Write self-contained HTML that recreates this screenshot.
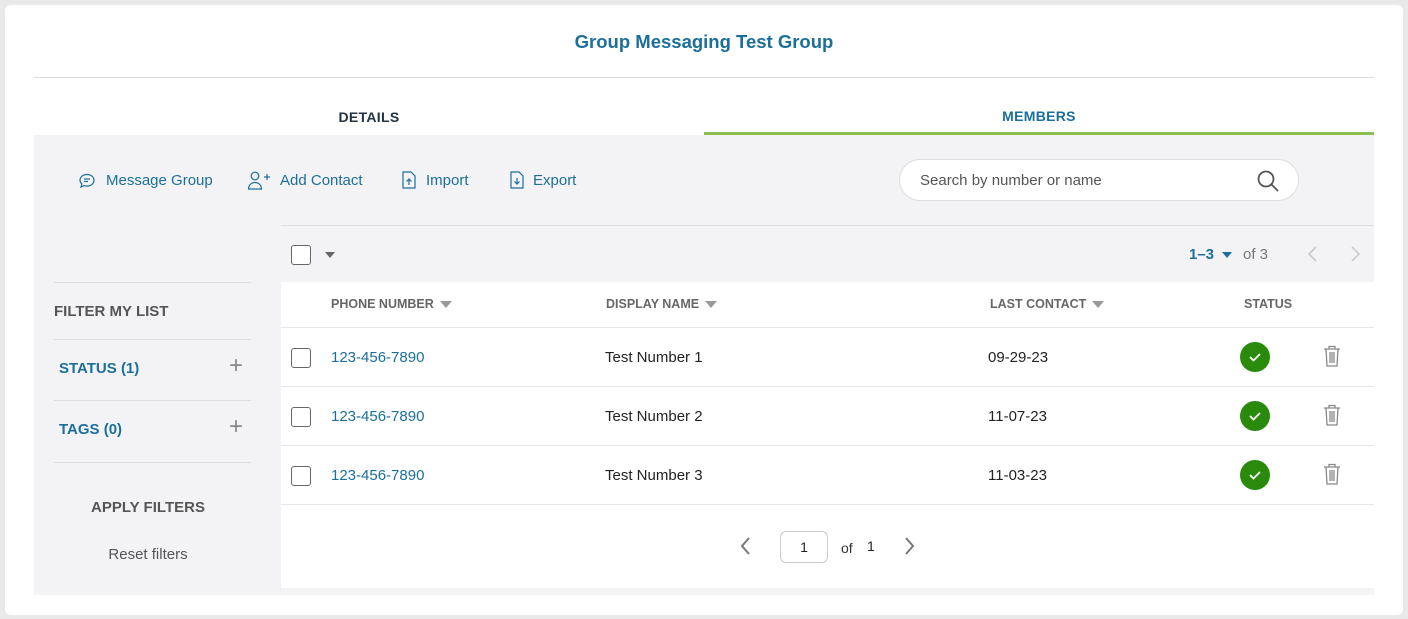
<!DOCTYPE html>
<html><head><meta charset="utf-8"><style>
*{box-sizing:border-box;margin:0;padding:0}
body{width:1408px;height:619px;background:#e9e9ea;font-family:"Liberation Sans",sans-serif;position:relative;overflow:hidden}
.card{position:absolute;left:5px;top:5px;width:1398px;height:610px;background:#fff;border-radius:6px}
.a{position:absolute;white-space:nowrap}
.blue{color:#1b6f99}
.gray{background:#f3f3f5}
.chk{position:absolute;width:20px;height:20px;border:1.5px solid #666;border-radius:3px;background:#fff}
.tri{display:inline-block;width:0;height:0;border-left:6px solid transparent;border-right:6px solid transparent;border-top:7px solid #999;vertical-align:middle;margin-left:6px}
.hdr{font-size:12.5px;color:#666;font-weight:bold}
.line{position:absolute;height:1px;background:#e6e6e8}
</style></head><body>
<div class="card"></div>
<div class="a blue" style="left:0;width:1408px;text-align:center;top:31px;font-size:18.5px;font-weight:bold;color:#1b6f99">Group Messaging Test Group</div>
<div class="line" style="left:34px;top:77px;width:1340px;background:#ddd"></div>
<div class="a" style="left:34px;width:670px;text-align:center;top:109px;font-size:14px;font-weight:bold;color:#234;letter-spacing:.3px">DETAILS</div>
<div class="a blue" style="left:704px;width:670px;text-align:center;top:108px;font-size:14px;font-weight:bold;letter-spacing:.3px">MEMBERS</div>
<div class="a" style="left:704px;top:132px;width:670px;height:3px;background:#8cc152"></div>
<div class="a gray" style="left:34px;top:135px;width:1340px;height:460px"></div>

<svg class="a" style="left:78px;top:172px" width="18" height="18" viewBox="0 0 18 18" fill="none" stroke="#1b6f99" stroke-width="1.2"><path d="M9 2.5c4 0 7 2.5 7 5.8s-3 5.8-7 5.8c-1 0-2-.2-2.8-.5L3 15l.9-3C2.8 11 2 9.7 2 8.3 2 5 5 2.5 9 2.5z"/><path d="M6 7h6M6 9.5h4"/></svg>
<div class="a blue" style="left:106px;top:172px;font-size:15px">Message Group</div>
<svg class="a" style="left:247px;top:170px" width="24" height="20" viewBox="0 0 24 20" fill="none" stroke="#1b6f99" stroke-width="1.2"><circle cx="8" cy="6" r="3.8"/><path d="M1.5 19c0-4 3-6.5 6.5-6.5s6.5 2.5 6.5 6.5z"/><path d="M17 7h6M20 4v6"/></svg>
<div class="a blue" style="left:280px;top:172px;font-size:15px">Add Contact</div>
<svg class="a" style="left:402px;top:171px" width="14" height="18" viewBox="0 0 14 18" fill="none" stroke="#1b6f99" stroke-width="1.2"><path d="M1 1h8l4 4v12H1z"/><path d="M7 14V8M4.5 10.5 7 8l2.5 2.5"/></svg>
<div class="a blue" style="left:426px;top:172px;font-size:15px">Import</div>
<svg class="a" style="left:510px;top:171px" width="14" height="18" viewBox="0 0 14 18" fill="none" stroke="#1b6f99" stroke-width="1.2"><path d="M1 1h8l4 4v12H1z"/><path d="M7 7v6M4.5 10.5 7 13l2.5-2.5"/></svg>
<div class="a blue" style="left:533px;top:172px;font-size:15px">Export</div>

<div class="a" style="left:899px;top:159px;width:400px;height:42px;border:1px solid #ddd;border-radius:21px;background:#fff"></div>
<div class="a" style="left:920px;top:172px;font-size:15px;color:#555">Search by number or name</div>
<svg class="a" style="left:1256px;top:169px" width="24" height="24" viewBox="0 0 24 24" fill="none" stroke="#555" stroke-width="1.8"><circle cx="10" cy="10" r="7.5"/><path d="M15.5 15.5 22 22"/></svg>

<div class="line" style="left:281px;top:225px;width:1093px;background:#ddd"></div>
<div class="chk" style="left:291px;top:245px"></div>
<div class="a" style="left:325px;top:252px;width:0;height:0;border-left:5px solid transparent;border-right:5px solid transparent;border-top:6px solid #666"></div>
<div class="a blue" style="left:1189px;top:246px;font-size:15px;font-weight:bold">1–3</div>
<div class="a" style="left:1222px;top:252px;width:0;height:0;border-left:5px solid transparent;border-right:5px solid transparent;border-top:6px solid #1b6f99"></div>
<div class="a" style="left:1243px;top:246px;font-size:15px;color:#777">of 3</div>
<svg class="a" style="left:1306px;top:245px" width="14" height="18" viewBox="0 0 14 18" fill="none" stroke="#ccc" stroke-width="1.8"><path d="M10 2 3 9l7 7"/></svg>
<svg class="a" style="left:1348px;top:245px" width="14" height="18" viewBox="0 0 14 18" fill="none" stroke="#ccc" stroke-width="1.8"><path d="M4 2l7 7-7 7"/></svg>

<div class="a" style="left:281px;top:282px;width:1093px;height:306px;background:#fff"></div>
<div class="a hdr" style="left:331px;top:297px">PHONE NUMBER<span class="tri"></span></div>
<div class="a hdr" style="left:606px;top:297px">DISPLAY NAME<span class="tri"></span></div>
<div class="a hdr" style="left:990px;top:297px">LAST CONTACT<span class="tri"></span></div>
<div class="a hdr" style="left:1244px;top:297px">STATUS</div>
<div class="line" style="left:281px;top:327px;width:1093px"></div>
<div class="line" style="left:281px;top:386px;width:1093px"></div>
<div class="line" style="left:281px;top:445px;width:1093px"></div>
<div class="line" style="left:281px;top:504px;width:1093px"></div>

<div class="chk" style="left:291px;top:348px"></div><div class="a blue" style="left:331px;top:349px;font-size:15px">123-456-7890</div><div class="a" style="left:605px;top:349px;font-size:15px;color:#222">Test Number 1</div><div class="a" style="left:988px;top:349px;font-size:15px;color:#222">09-29-23</div>
<div class="chk" style="left:291px;top:407px"></div><div class="a blue" style="left:331px;top:408px;font-size:15px">123-456-7890</div><div class="a" style="left:605px;top:408px;font-size:15px;color:#222">Test Number 2</div><div class="a" style="left:988px;top:408px;font-size:15px;color:#222">11-07-23</div>
<div class="chk" style="left:291px;top:466px"></div><div class="a blue" style="left:331px;top:467px;font-size:15px">123-456-7890</div><div class="a" style="left:605px;top:467px;font-size:15px;color:#222">Test Number 3</div><div class="a" style="left:988px;top:467px;font-size:15px;color:#222">11-03-23</div>

<svg class="a" style="left:1240px;top:342px" width="30" height="148" viewBox="0 0 30 148"><g fill="#2a8a0c"><circle cx="15" cy="15" r="15"/><circle cx="15" cy="74" r="15"/><circle cx="15" cy="133" r="15"/></g><g fill="none" stroke="#fff" stroke-width="1.8"><path d="M10 15l3.5 3.5L20 12"/><path d="M10 74l3.5 3.5L20 71"/><path d="M10 133l3.5 3.5L20 130"/></g></svg>
<svg class="a" style="left:1323px;top:345px" width="18" height="140" viewBox="0 0 18 140" fill="none" stroke="#888" stroke-width="1.3"><g id="t"><path d="M1 4h16M6 4V1.5h6V4M3 4l1 17h10l1-17M7 7v11M9 7v11M11 7v11"/></g><use href="#t" y="59"/><use href="#t" y="118"/></svg>

<div class="a" style="left:739px;top:536px"><svg width="14" height="20" viewBox="0 0 14 20" fill="none" stroke="#777" stroke-width="2"><path d="M10 2 3 10l7 8"/></svg></div>
<div class="a" style="left:780px;top:531px;width:48px;height:32px;border:1px solid #ccc;border-radius:6px;background:#fff;text-align:center;line-height:30px;font-size:14px;color:#222">1</div>
<div class="a" style="left:841px;top:540px;font-size:14px;color:#333">of</div>
<div class="a" style="left:867px;top:538px;font-size:14px;color:#222">1</div>
<div class="a" style="left:902px;top:536px"><svg width="14" height="20" viewBox="0 0 14 20" fill="none" stroke="#777" stroke-width="2"><path d="M4 2l7 8-7 8"/></svg></div>

<div class="line" style="left:54px;top:282px;width:197px;background:#ddd"></div>
<div class="a" style="left:54px;top:303px;font-size:15px;font-weight:bold;color:#555">FILTER MY LIST</div>
<div class="line" style="left:54px;top:339px;width:197px;background:#ddd"></div>
<div class="a blue" style="left:59px;top:360px;font-size:15px;font-weight:bold">STATUS (1)</div>
<div class="a" style="left:229px;top:352px;font-size:24px;color:#888;font-weight:300">+</div>
<div class="line" style="left:54px;top:400px;width:197px;background:#ddd"></div>
<div class="a blue" style="left:59px;top:421px;font-size:15px;font-weight:bold">TAGS (0)</div>
<div class="a" style="left:229px;top:413px;font-size:24px;color:#888;font-weight:300">+</div>
<div class="line" style="left:54px;top:462px;width:197px;background:#ddd"></div>
<div class="a" style="left:34px;width:228px;text-align:center;top:499px;font-size:15px;font-weight:bold;color:#555">APPLY FILTERS</div>
<div class="a" style="left:34px;width:228px;text-align:center;top:546px;font-size:15px;color:#555">Reset filters</div>
</body></html>
